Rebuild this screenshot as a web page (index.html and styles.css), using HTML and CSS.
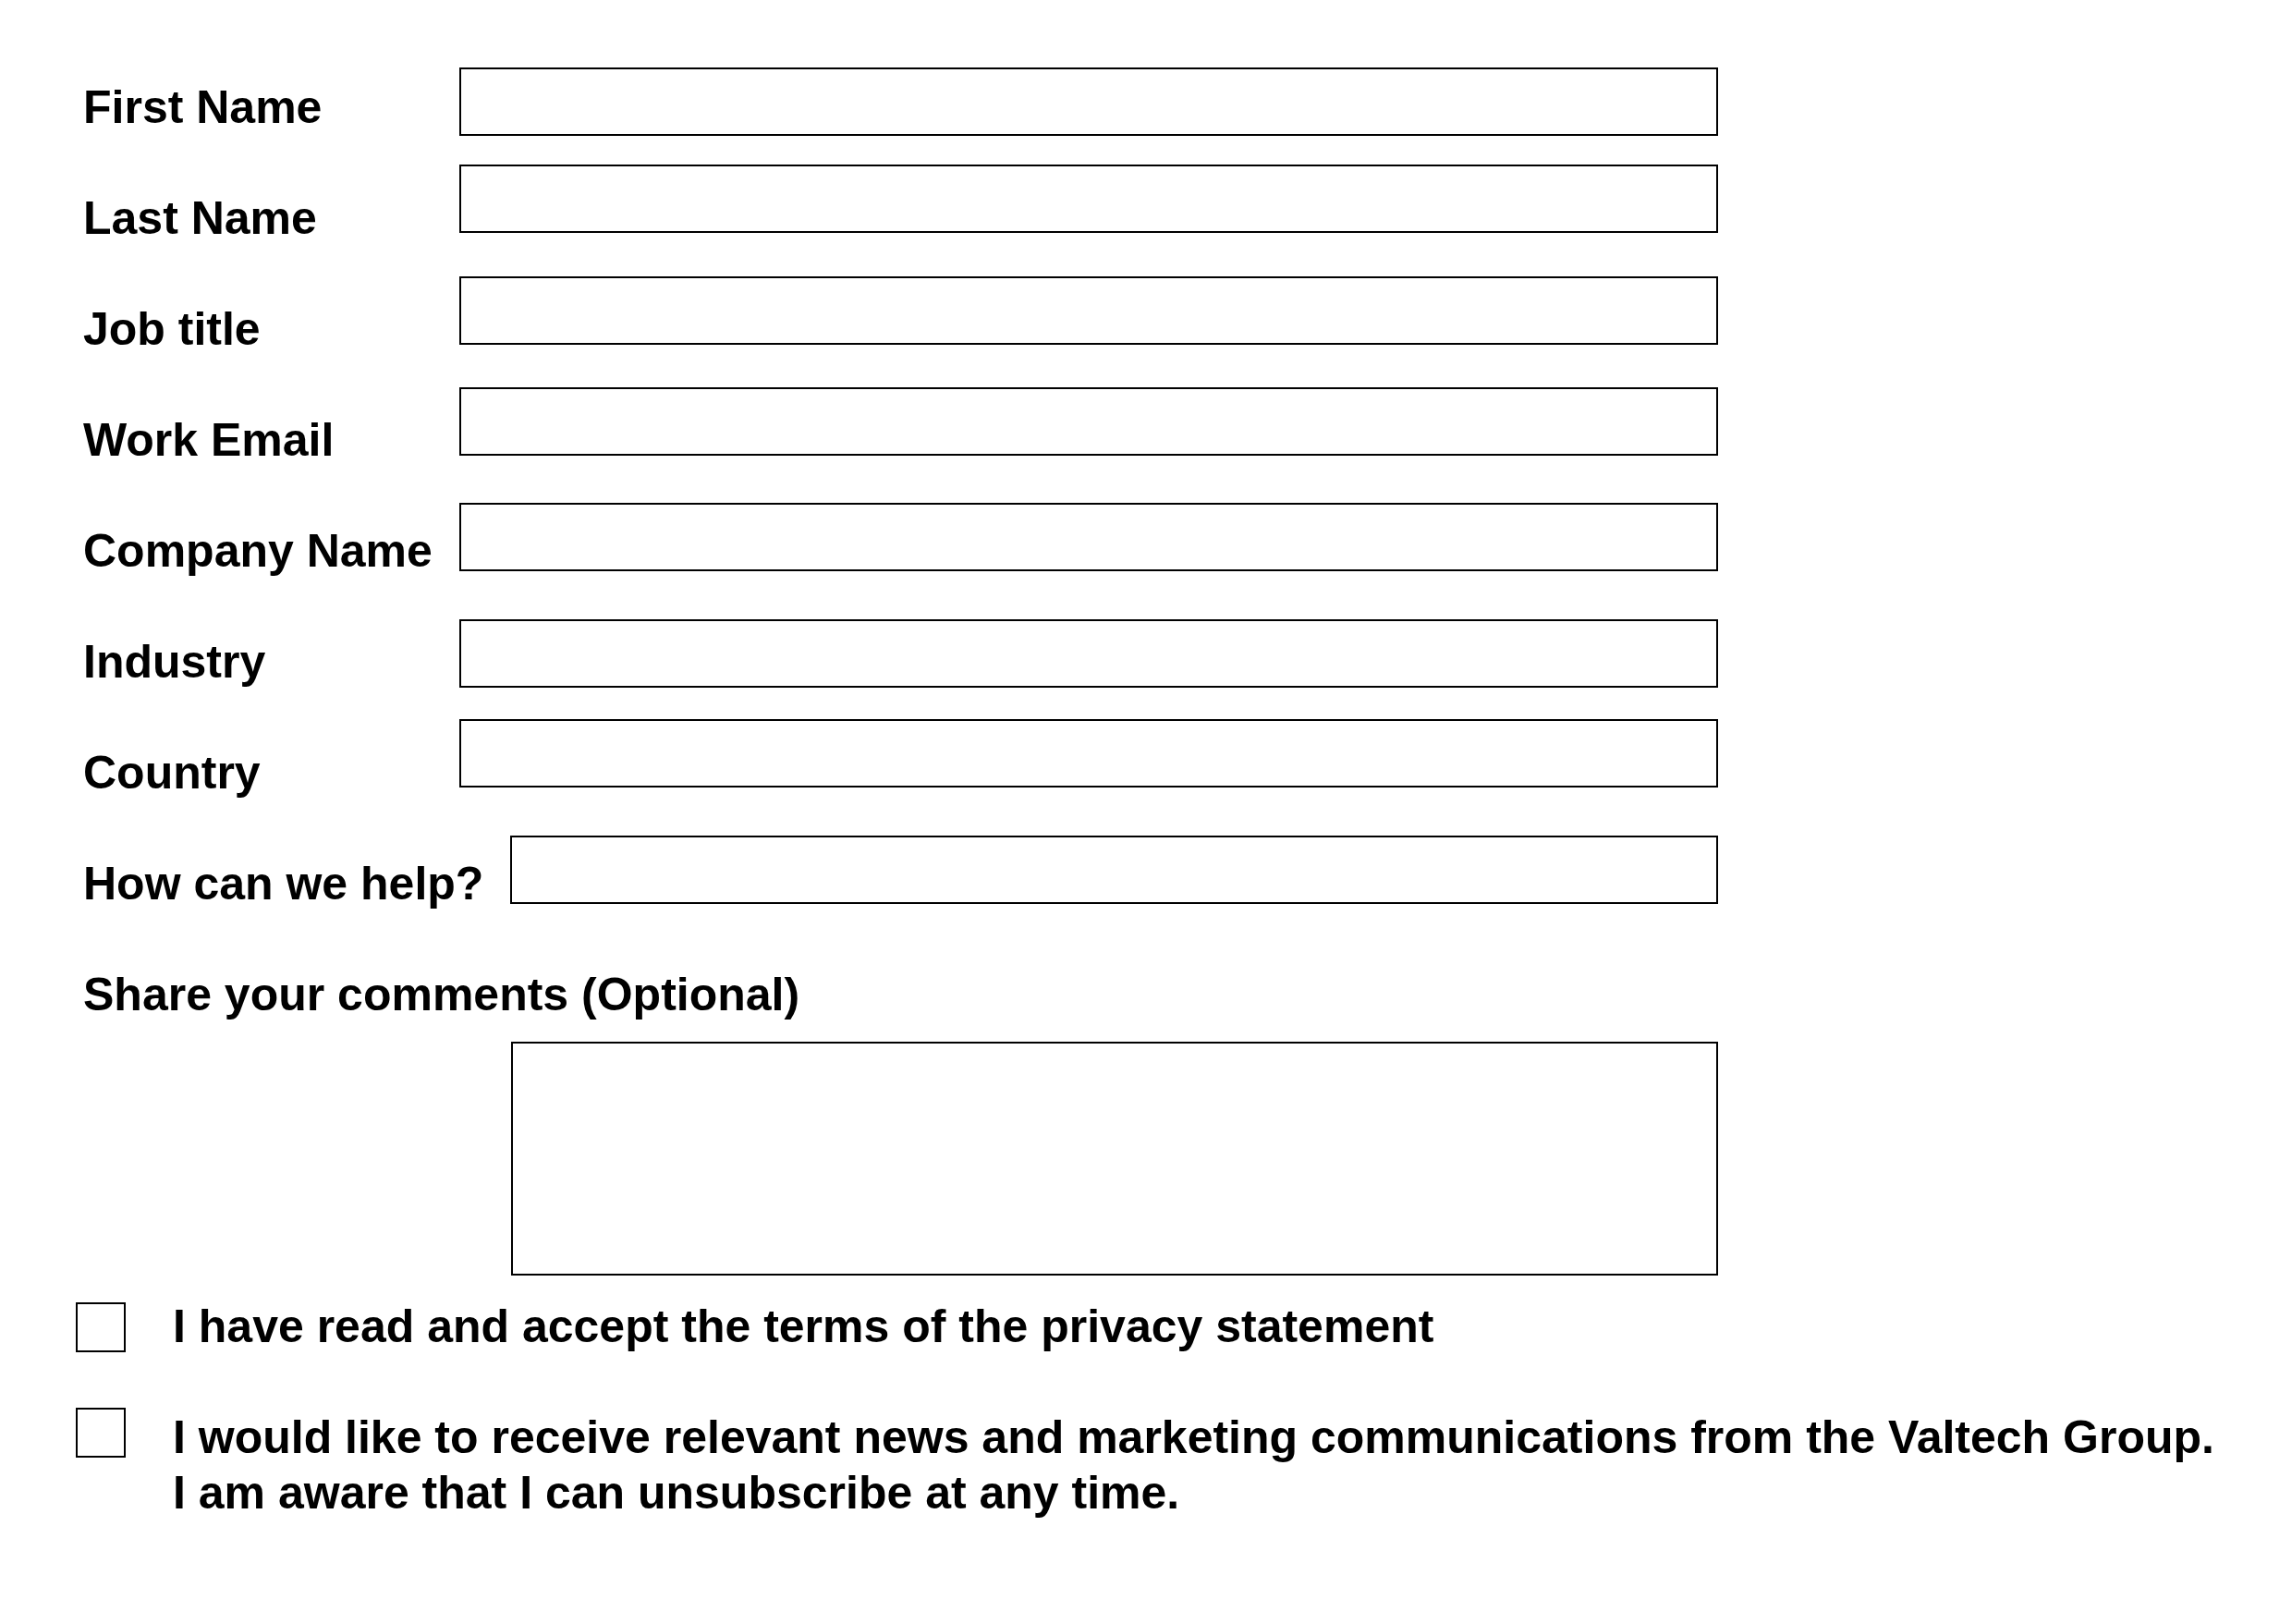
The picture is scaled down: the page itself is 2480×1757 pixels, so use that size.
FILE: index.html
```html
<!DOCTYPE html>
<html lang="en">
<head>
<meta charset="utf-8">
<title>Contact form</title>
<link rel="stylesheet" href="styles.css">
</head>
<body>
<form class="contact-form">
  <div class="field">
    <label class="field__label" for="first-name">First Name</label>
    <input class="field__input" id="first-name" type="text">
  </div>
  <div class="field">
    <label class="field__label" for="last-name">Last Name</label>
    <input class="field__input" id="last-name" type="text">
  </div>
  <div class="field">
    <label class="field__label" for="job-title">Job title</label>
    <input class="field__input" id="job-title" type="text">
  </div>
  <div class="field">
    <label class="field__label" for="work-email">Work Email</label>
    <input class="field__input" id="work-email" type="text">
  </div>
  <div class="field">
    <label class="field__label" for="company">Company Name</label>
    <input class="field__input" id="company" type="text">
  </div>
  <div class="field">
    <label class="field__label" for="industry">Industry</label>
    <input class="field__input" id="industry" type="text">
  </div>
  <div class="field">
    <label class="field__label" for="country">Country</label>
    <input class="field__input" id="country" type="text">
  </div>
  <div class="field">
    <label class="field__label" for="help">How can we help?</label>
    <input class="field__input" id="help" type="text">
  </div>
  <div class="field field--comments">
    <label class="field__label" for="comments">Share your comments (Optional)</label>
  </div>
  <textarea class="comments" id="comments"></textarea>
  <div class="consent">
    <label class="consent__item">
      <input class="consent__box" type="checkbox">
      <span class="consent__text">I have read and accept the terms of the privacy statement</span>
    </label>
    <label class="consent__item">
      <input class="consent__box" type="checkbox">
      <span class="consent__text">I would like to receive relevant news and marketing communications from the Valtech Group.<br>I am aware that I can unsubscribe at any time.</span>
    </label>
  </div>
</form>
</body>
</html>
```
FILE: styles.css
```css
html, body {
  margin: 0;
  padding: 0;
  background: #ffffff;
}

body {
  color: #000000;
  font-family: "Liberation Sans", Arial, Helvetica, sans-serif;
}

.contact-form {
  width: 1769px;
  padding: 58px 0 0 90px;
  font-size: 50px;
  font-weight: 700;
}

.field {
  display: flex;
  align-items: flex-start;
  height: 120px;
}

.field__label {
  display: block;
  min-width: 378px;
  margin-right: 29px;
  padding-top: 28px;
  line-height: 60px;
  white-space: nowrap;
}

.field__input {
  flex: 1;
  -webkit-appearance: none;
  appearance: none;
  box-sizing: border-box;
  height: 74px;
  margin: 0;
  padding: 0 12px;
  border: 2px solid #000000;
  border-radius: 0;
  background: #ffffff;
  font: inherit;
  outline: none;
}

.field:nth-child(1) .field__input { margin-top: 15px; }
.field:nth-child(2) .field__input { margin-top: 0; }
.field:nth-child(3) .field__input { margin-top: 1px; }
.field:nth-child(4) .field__input { margin-top: 1px; }
.field:nth-child(5) .field__input { margin-top: 6px; }
.field:nth-child(6) .field__input { margin-top: 12px; }
.field:nth-child(7) .field__input { margin-top: 0; }
.field:nth-child(8) .field__input { margin-top: 6px; }

.field--comments {
  height: auto;
}

.comments {
  display: block;
  box-sizing: border-box;
  width: 1306px;
  height: 253px;
  margin: 21px 0 0 463px;
  padding: 0;
  border: 2px solid #000000;
  border-radius: 0;
  background: #ffffff;
  font: inherit;
  resize: none;
  outline: none;
}

.consent {
  display: flex;
  flex-direction: column;
  gap: 60px;
  margin: 25px 0 0 -8px;
}

.consent__item {
  display: flex;
  align-items: flex-start;
}

.consent__box {
  -webkit-appearance: none;
  appearance: none;
  box-sizing: border-box;
  flex: none;
  width: 54px;
  height: 54px;
  margin: 4px 51px 0 0;
  border: 2px solid #000000;
  border-radius: 0;
  background: #ffffff;
}

.consent__item:nth-child(2) .consent__box {
  margin-top: -2px;
}

.consent__text {
  line-height: 60px;
  white-space: nowrap;
}
```
